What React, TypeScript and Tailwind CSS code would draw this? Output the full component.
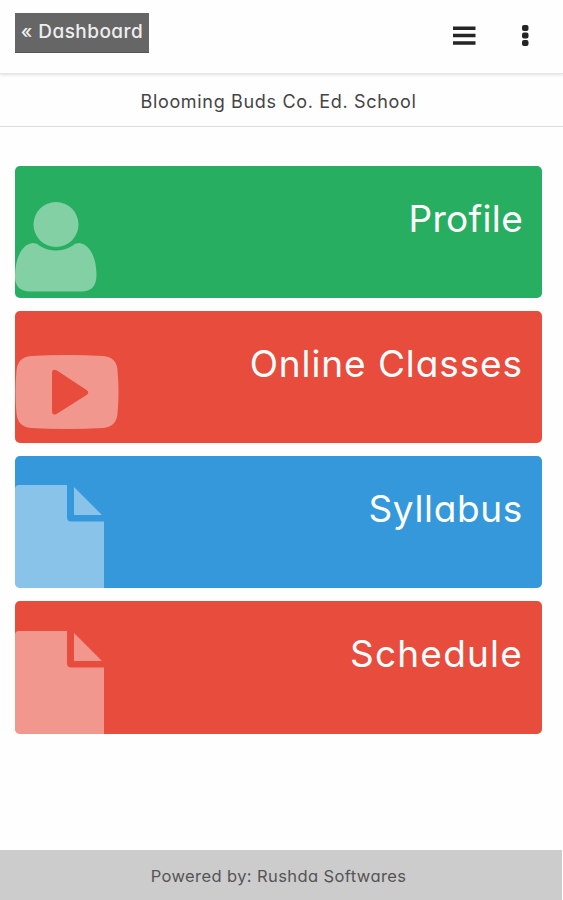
import clsx from 'clsx';

const UserIcon = (): JSX.Element => (
  <svg viewBox="0 0 82 90" className="w-[82px] h-[90px]" fill="currentColor">
    <circle cx="41" cy="22.5" r="22.5" />
    <path d="M18 41Q22 41 25 44C35 50 47 50 57 44Q60 41 64 41C75 42 81.500 56 81.500 73C81.500 84 76.500 89.500 66 89.500H15.500C5 89.500 0 84 0 75C0 56 7 42 18 41Z" />
  </svg>
);

const VideoIcon = (): JSX.Element => (
  <svg viewBox="0 0 104 76" className="w-[104px] h-[76px]" fill="currentColor">
    <path
      fillRule="evenodd"
      d="M16 2Q52 0 88 2Q101.500 3 102.500 16Q104.500 38 102.500 60Q101 73 88 74Q52 76 16 74Q3 73 1.500 60Q-0.500 38 1.500 16Q3 3 16 2ZM37 19V57Q37 62 41.500 60L71.500 41Q75 38.500 71.500 36L42 16.500Q37 14 37 19Z"
    />
  </svg>
);

const FileIcon = (): JSX.Element => (
  <svg viewBox="0 0 90 103" className="w-[90px] h-[103px]" fill="currentColor">
    <path d="M4 0H52V32Q52 36.500 56 36.500H89V103H0V4Q0 0 4 0Z" />
    <path d="M59 2Q61 4 63 6L84 27Q86 29 87 30H59Z" />
  </svg>
);

const cards = [
  {
    title: 'Profile',
    color: 'bg-[#27ae60]',
    text: 'tracking-[0.3px]',
    iconBox: 'pb-[6px]',
    Icon: UserIcon,
  },
  {
    title: 'Online Classes',
    color: 'bg-[#e74c3c]',
    text: 'tracking-[0.9px]',
    iconBox: 'pb-[13px]',
    Icon: VideoIcon,
  },
  {
    title: 'Syllabus',
    color: 'bg-[#3498db]',
    text: 'tracking-[0.65px]',
    iconBox: 'pb-0',
    Icon: FileIcon,
  },
  {
    title: 'Schedule',
    color: 'bg-[#e74c3c]',
    text: 'tracking-[1.2px]',
    iconBox: 'pb-0',
    Icon: FileIcon,
  },
];

const Header = (): JSX.Element => (
  <header className="flex items-start justify-between h-[74px] pl-[15px] pr-[34px] pt-[13px] border-b border-[#e5e5e5] shadow-[0_1px_3px_rgba(0,0,0,0.12)]">
    <a
      href="#"
      className="flex items-center justify-center w-[134px] h-10 bg-[#666] text-[#eee] text-[19px] tracking-[0.45px] font-medium whitespace-nowrap border-b border-[#555]"
    >
      « Dashboard
    </a>
    <div className="flex items-start pt-3 text-[#252525]">
      <button type="button" aria-label="Menu" className="mr-[46px] pt-[1px]">
        <svg viewBox="0 0 23 20" className="block w-[23px] h-5" fill="currentColor">
          <path d="M0 0.500H22.500V4H0ZM0 7.800H22.500V11.300H0ZM0 15.200H22.500V18.700H0Z" />
        </svg>
      </button>
      <button type="button" aria-label="More">
        <svg viewBox="0 0 7 22" className="block w-[7px] h-[22px]" fill="currentColor">
          <rect y="0" width="6.500" height="6" rx="2" />
          <rect y="7.500" width="6.500" height="6" rx="2" />
          <rect y="15" width="6.500" height="6" rx="2" />
        </svg>
      </button>
    </div>
  </header>
);

export default function App(): JSX.Element {
  return (
    <div className="flex flex-col w-full h-[900px] overflow-hidden bg-[#fefefe] font-['Inter','Open_Sans',sans-serif] [font-feature-settings:'cv11']">
      <Header />
      <h1 className="h-[53px] pr-[6px] border-b border-[#ddd] text-center text-[18px] leading-[56px] tracking-[0.67px] text-[#444]">
        Blooming Buds Co. Ed. School
      </h1>
      <main className="flex flex-col flex-1 gap-[13px] pt-[38.500px] pl-[15px] pr-[21px]">
        {cards.map(({ title, color, text, iconBox, Icon }) => (
          <a
            key={title}
            href="#"
            className={clsx(
              'flex justify-between h-[132.300px] pr-[19px] rounded-[5px] overflow-hidden text-white',
              color
            )}
          >
            <span className={clsx('flex items-end text-white/42', iconBox)}>
              <Icon />
            </span>
            <span
              className={clsx('pt-[28px] text-[37px] leading-[50px] whitespace-nowrap', text)}
            >
              {title}
            </span>
          </a>
        ))}
      </main>
      <footer className="h-[50px] mr-px pr-[5px] bg-[#ccc] text-center text-[16.5px] leading-[53px] tracking-[0.4px] text-[#555]">
        Powered by: Rushda Softwares
      </footer>
    </div>
  );
}
